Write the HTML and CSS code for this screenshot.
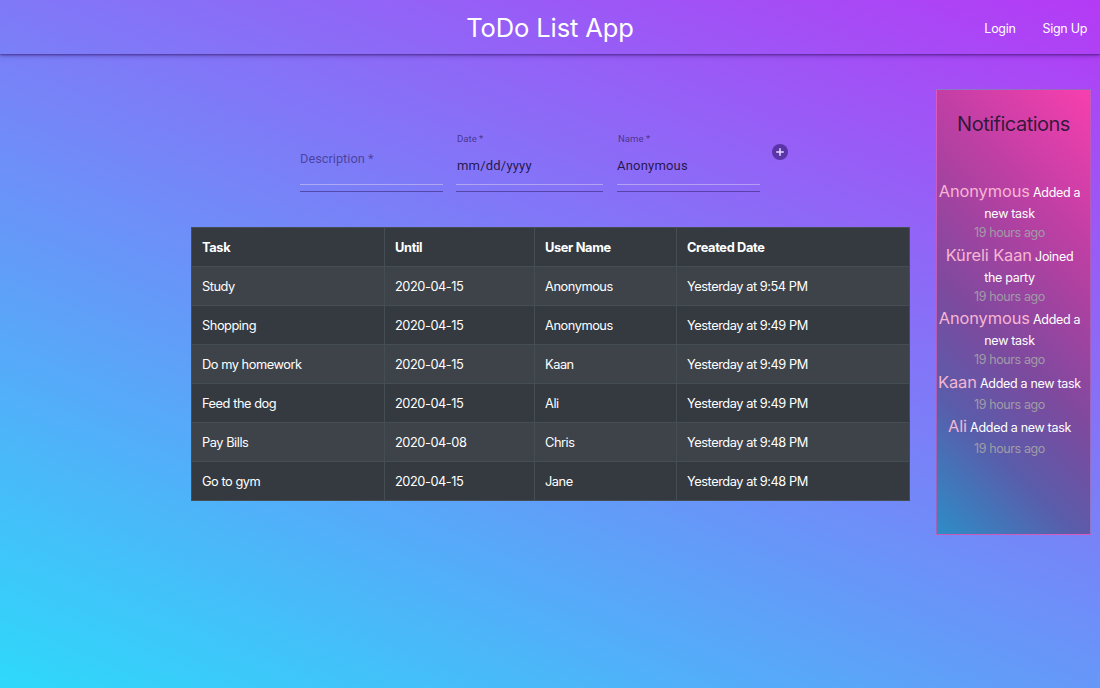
FILE: index.html
```html
<!DOCTYPE html>
<html lang="en">
<head>
<meta charset="utf-8">
<title>ToDo List App</title>
<link rel="stylesheet" href="styles.css">
</head>
<body>
<header class="appbar">
  <div class="appbar-spacer"></div>
  <h1 class="app-title">ToDo List App</h1>
  <nav class="appbar-nav">
    <a class="nav-link">Login</a>
    <a class="nav-link">Sign Up</a>
  </nav>
</header>
<div class="page">
  <main class="main-col">
    <form class="task-form">
      <div class="field field-desc">
        <span class="field-label field-label-rest">Description *</span>
        <div class="field-input"></div>
      </div>
      <div class="field field-date">
        <span class="field-label">Date *</span>
        <div class="field-input">mm/dd/yyyy</div>
      </div>
      <div class="field field-name">
        <span class="field-label">Name *</span>
        <div class="field-input">Anonymous</div>
      </div>
      <button type="button" class="add-btn" aria-label="add">
        <svg width="16" height="16" viewBox="0 0 16 16"><circle cx="8" cy="8" r="8" class="add-circle"/><path d="M8 4.2v7.6M4.2 8h7.6" class="add-plus"/></svg>
      </button>
    </form>
    <table class="task-table">
      <colgroup><col class="c1"><col class="c2"><col class="c3"><col class="c4"></colgroup>
      <thead>
        <tr><th>Task</th><th>Until</th><th>User Name</th><th>Created Date</th></tr>
      </thead>
      <tbody>
        <tr><td>Study</td><td>2020-04-15</td><td>Anonymous</td><td>Yesterday at 9:54 PM</td></tr>
        <tr><td>Shopping</td><td>2020-04-15</td><td>Anonymous</td><td>Yesterday at 9:49 PM</td></tr>
        <tr><td>Do my homework</td><td>2020-04-15</td><td>Kaan</td><td>Yesterday at 9:49 PM</td></tr>
        <tr><td>Feed the dog</td><td>2020-04-15</td><td>Ali</td><td>Yesterday at 9:49 PM</td></tr>
        <tr><td>Pay Bills</td><td>2020-04-08</td><td>Chris</td><td>Yesterday at 9:48 PM</td></tr>
        <tr><td>Go to gym</td><td>2020-04-15</td><td>Jane</td><td>Yesterday at 9:48 PM</td></tr>
      </tbody>
    </table>
  </main>
  <aside class="side-col">
    <section class="notif-panel">
      <h2 class="notif-title">Notifications</h2>
      <ul class="notif-list">
        <li class="notif"><span class="who">Anonymous</span> Added a new task<div class="when">19 hours ago</div></li>
        <li class="notif"><span class="who">Küreli Kaan</span> Joined the party<div class="when">19 hours ago</div></li>
        <li class="notif"><span class="who">Anonymous</span> Added a new task<div class="when">19 hours ago</div></li>
        <li class="notif"><span class="who">Kaan</span> Added a new task<div class="when">19 hours ago</div></li>
        <li class="notif"><span class="who">Ali</span> Added a new task<div class="when">19 hours ago</div></li>
      </ul>
    </section>
  </aside>
</div>
</body>
</html>
```
FILE: styles.css
```css
html, body {
  margin: 0;
  padding: 0;
  height: 100%;
}
body {
  font-family: Inter, "Noto Sans", sans-serif;
  background: linear-gradient(23deg, #2ed9fa 0%, #7388f8 50%, #b53af5 100%);
  background-attachment: fixed;
  min-height: 688px;
  overflow: hidden;
}

/* header */
.appbar {
  height: 54px;
  display: grid;
  grid-template-columns: 1fr auto 1fr;
  align-items: center;
  box-shadow: 0 1px 2px rgba(40, 10, 90, 0.55), 0 2px 5px rgba(40, 10, 90, 0.25);
}
.app-title {
  margin: 0;
  font-weight: 400;
  font-size: 25.5px;
  color: #fff;
  letter-spacing: -0.1px;
  padding-top: 1px;
}
.appbar-nav {
  justify-self: end;
  display: flex;
  gap: 27px;
  padding-right: 13px;
  padding-top: 2px;
}
.nav-link {
  color: #fff;
  font-size: 12.5px;
  letter-spacing: -0.3px;
}

/* layout */
.page {
  display: grid;
  grid-template-columns: 191px 718px 1fr;
}
.main-col {
  grid-column: 2;
  padding-top: 77px;
}
.side-col {
  padding: 35px 9px 0 27px;
}

/* form */
.task-form {
  display: flex;
  justify-content: center;
  align-items: flex-start;
  margin: 0 0 35px 0;
  font-family: Roboto, "Noto Sans", sans-serif;
}
.field {
  position: relative;
  padding-top: 13px;
  padding-bottom: 6px;
  border-bottom: 1px solid rgba(50, 30, 110, 0.55);
}
.field-desc { width: 143px; margin-right: 13px; }
.field-date { width: 147px; margin-right: 14px; }
.field-name { width: 143px; }
.field-label {
  position: absolute;
  top: 2px;
  left: 1px;
  font-size: 9.6px;
  line-height: 12px;
  color: rgba(30, 15, 70, 0.62);
}
.field-desc .field-label-rest {
  top: 20px;
  left: 0;
  font-size: 12.8px;
  line-height: 16px;
  color: rgba(40, 25, 100, 0.6);
}
.field-input {
  margin-top: 10px;
  height: 24px;
  line-height: 24px;
  padding-bottom: 6px;
  font-size: 13px;
  color: rgba(20, 10, 50, 0.88);
  border-bottom: 1px solid rgba(215, 205, 235, 0.55);
  letter-spacing: 0.2px;
}
.field-date .field-input { padding-left: 1px; }
.add-btn {
  width: 40px;
  height: 40px;
  margin-top: 1px;
  padding: 12px;
  border: 0;
  background: none;
  display: flex;
  align-items: center;
  justify-content: center;
  cursor: pointer;
}
.add-circle { fill: rgba(55, 25, 120, 0.62); }
.add-plus { stroke: #e6ddff; stroke-width: 1.5; }

/* table */
.task-table {
  width: 718px;
  table-layout: fixed;
  border-collapse: collapse;
  background: #343a40;
  color: #fff;
  font-size: 12.8px;
  letter-spacing: -0.45px;
  border: 1px solid #454d55;
}
.c1 { width: 193px; }
.c2 { width: 150px; }
.c3 { width: 142px; }
.c4 { width: 233px; }
.task-table th,
.task-table td {
  text-align: left;
  padding: 9.5px 10px;
  line-height: 19px;
  border: 1px solid #454d55;
  white-space: nowrap;
}
.task-table th { font-weight: 700; letter-spacing: -0.35px; }
.task-table tbody tr:nth-child(odd) { background: #3e4349; }

/* notifications */
.notif-panel {
  height: 446px;
  box-sizing: border-box;
  border: 1px solid rgba(200, 110, 200, 0.6);
  background: linear-gradient(45deg, #2d8dc7 0%, #5a5caa 24%, #7c4a9e 42%, #ad41a1 64%, #c33fa5 75%, #f83fae 100%);
  text-align: center;
  padding: 22px 4px 0;
}
.notif-title {
  margin: 0 0 42px;
  font-size: 20px;
  line-height: 25px;
  font-weight: 400;
  letter-spacing: -0.5px;
  color: rgba(30, 20, 45, 0.9);
}
.notif-list {
  list-style: none;
  margin: 0 4px 0 -4px;
  padding: 0;
}
.notif {
  font-size: 12.5px;
  line-height: 19.3px;
  letter-spacing: -0.3px;
  color: #fff;
}
.who {
  font-size: 16.4px;
  line-height: 25px;
  letter-spacing: -0.1px;
  color: #f7b6d2;
}
.when {
  font-size: 12.5px;
  line-height: 19.3px;
  letter-spacing: -0.4px;
  color: #a09ca6;
}
```
